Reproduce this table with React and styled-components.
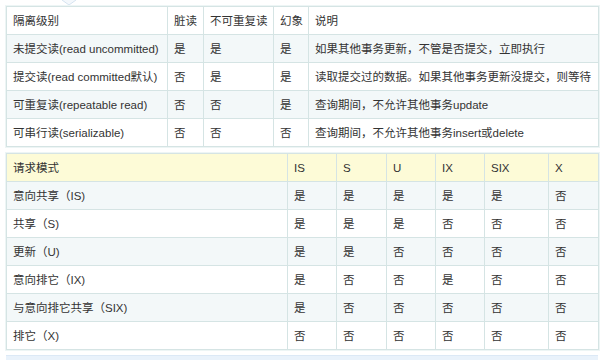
import React from 'react';
import styled, {createGlobalStyle, css} from 'styled-components';

const GlobalStyle = createGlobalStyle`
  html, body {
    margin: 0;
    padding: 0;
    background: #ffffff;
  }
  body {
    font-family: "Liberation Sans", "Noto Sans CJK SC", sans-serif;
    font-size: 12px;
    color: #333333;
  }
`;

const Page = styled.div`
  width: 600px;
  height: 360px;
  overflow: hidden;
  display: flex;
  flex-direction: column;
  padding: 0 2px 0 6px;
  box-sizing: border-box;
`;

const Notch = styled.div`
  height: 7px;
  padding-left: 56px;
  display: flex;
  align-items: flex-start;
`;

const Table = styled.table`
  border-collapse: collapse;
  table-layout: fixed;
  width: 592px;
  border: 1px solid #d5e4e4;
  box-shadow: 0 0 0 1px #edf5f5;
  margin-bottom: ${props => props.gap || 0}px;
`;

const Row = styled.tr`
  height: 28px;
  background: #ffffff;
  ${props =>
    props.striped &&
    css`
      background: #f3f8f9;
    `}
  ${props =>
    props.head &&
    css`
      background: #fdfbd7;
    `}
`;

const Cell = styled.td`
  border: 1px solid #d5e4e4;
  padding: 0 6px;
  white-space: nowrap;
  overflow: hidden;
  line-height: 26px;
  font-size: 11.5px;
  color: #333333;
  vertical-align: middle;
`;

const Band = styled.div`
  margin-top: 5px;
  height: 8px;
  background: #e9f2fb;
  border-top: 1px solid #dce9f6;
`;

const isoCols = [161, 36, 70, 35, 290];
const isoRows = [
  ['隔离级别', '脏读', '不可重复读', '幻象', '说明'],
  ['未提交读(read uncommitted)', '是', '是', '是', '如果其他事务更新，不管是否提交，立即执行'],
  ['提交读(read committed默认)', '否', '是', '是', '读取提交过的数据。如果其他事务更新没提交，则等待'],
  ['可重复读(repeatable read)', '否', '否', '是', '查询期间，不允许其他事务update'],
  ['可串行读(serializable)', '否', '否', '否', '查询期间，不允许其他事务insert或delete'],
];

const lockCols = [281, 49, 50, 49, 49, 64, 50];
const lockRows = [
  ['请求模式', 'IS', 'S', 'U', 'IX', 'SIX', 'X'],
  ['意向共享（IS)', '是', '是', '是', '是', '是', '否'],
  ['共享（S)', '是', '是', '是', '否', '否', '否'],
  ['更新（U)', '是', '是', '否', '否', '否', '否'],
  ['意向排它（IX)', '是', '否', '否', '是', '否', '否'],
  ['与意向排它共享（SIX)', '是', '否', '否', '否', '否', '否'],
  ['排它（X)', '否', '否', '否', '否', '否', '否'],
];

function Grid({cols, rows, yellowHead, gap}) {
  return (
    <Table gap={gap}>
      <colgroup>
        {cols.map((w, i) => <col key={i} style={{width: w}} />)}
      </colgroup>
      <tbody>
        {rows.map((r, i) => (
          <Row key={i} head={yellowHead && i === 0} striped={i % 2 === 1}>
            {r.map((c, j) => <Cell key={j}>{c}</Cell>)}
          </Row>
        ))}
      </tbody>
    </Table>
  );
}

export default function App() {
  return (
    <Page>
      <GlobalStyle />
      <Notch>
        <svg width="14" height="6" viewBox="0 0 14 6">
          <path d="M0 0 L7 5 L14 0" fill="#f4f8fc" stroke="#d6e3f0" strokeWidth="1" />
        </svg>
      </Notch>
      <Grid cols={isoCols} rows={isoRows} gap={6} />
      <Grid cols={lockCols} rows={lockRows} yellowHead />
      <Band />
    </Page>
  );
}
